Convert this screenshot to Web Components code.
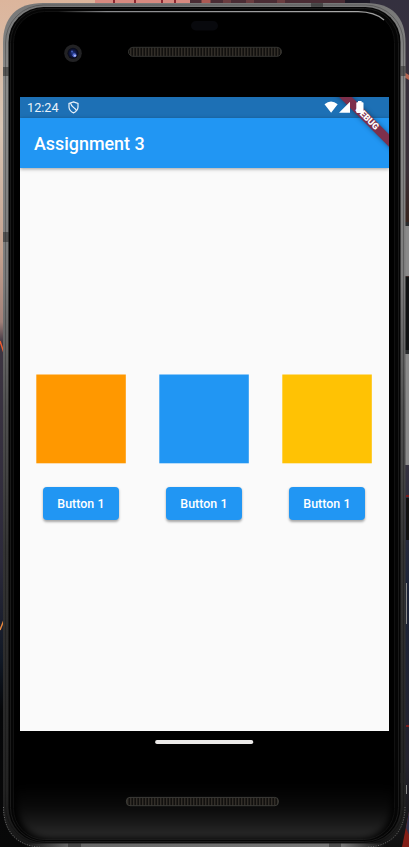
<!DOCTYPE html>
<html lang="en"><head><meta charset="utf-8"><title>Assignment 3</title>
<style>html,body{margin:0;width:409px;height:847px;overflow:hidden;background:#000}</style></head>
<body>
<phone-device><app-screen></app-screen></phone-device>
<script>
const define=(name,html)=>customElements.define(name,class extends HTMLElement{
  constructor(){super();const t=document.createElement('template');
    t.innerHTML=html.replace(/\{(\w+)\}/g,(m,k)=>this.getAttribute(k)||'');
    this.attachShadow({mode:'open'}).append(t.content.cloneNode(true));}
});

define('phone-device',`<style>
:host{display:grid;width:409px;height:847px;overflow:hidden}
svg{grid-area:1/1;display:block}
.face{grid-area:1/1;padding:97px 20px 0 20px;z-index:1}
</style>
<svg width="409" height="847" viewBox="0 0 409 847">
<defs>
<linearGradient id="wl" x2="0" y2="1"><stop offset="0" stop-color="#dcb59c"/><stop offset=".15" stop-color="#d8c5b4"/><stop offset=".3" stop-color="#c5a28f"/><stop offset=".38" stop-color="#a08078"/><stop offset=".405" stop-color="#3d3542"/><stop offset=".66" stop-color="#2c2a3b"/><stop offset=".78" stop-color="#101825"/><stop offset=".84" stop-color="#050608"/><stop offset="1" stop-color="#080808"/></linearGradient>
<linearGradient id="wr" x2="0" y2="1"><stop offset="0" stop-color="#34303f"/><stop offset=".2" stop-color="#3a3038"/><stop offset=".26" stop-color="#38251f"/><stop offset=".55" stop-color="#353240"/><stop offset=".7" stop-color="#1c2438"/><stop offset=".9" stop-color="#24232e"/><stop offset="1" stop-color="#111"/></linearGradient>
<linearGradient id="rim" x2="0" y2="1"><stop offset="0" stop-color="#777"/><stop offset=".1" stop-color="#8b8b8a"/><stop offset=".33" stop-color="#7b7b7b"/><stop offset=".48" stop-color="#505050"/><stop offset=".65" stop-color="#343434"/><stop offset=".93" stop-color="#232323"/><stop offset="1" stop-color="#161616"/></linearGradient>
<linearGradient id="low" gradientUnits="userSpaceOnUse" x1="0" y1="785" x2="0" y2="841"><stop offset="0" stop-color="#000"/><stop offset=".4" stop-color="#0a0a0a"/><stop offset=".65" stop-color="#171717"/><stop offset=".93" stop-color="#2b2b2b"/><stop offset="1" stop-color="#141414"/></linearGradient>
<linearGradient id="base"><stop offset="0" stop-color="#666" stop-opacity="0"/><stop offset=".12" stop-color="#666"/><stop offset=".88" stop-color="#777"/><stop offset="1" stop-color="#777" stop-opacity="0"/></linearGradient>
<linearGradient id="shine"><stop offset="0" stop-color="#999" stop-opacity="0"/><stop offset=".15" stop-color="#88898c"/><stop offset=".9" stop-color="#aaa"/><stop offset="1" stop-color="#999"/></linearGradient>
<pattern id="mesh" width="3" height="10" patternUnits="userSpaceOnUse"><rect width="3" height="10" fill="#11100e"/><rect x="1" width="1.4" height="10" fill="#322e28"/></pattern>
<radialGradient id="lens"><stop offset="0" stop-color="#223b91"/><stop offset=".5" stop-color="#111a4a"/><stop offset="1" stop-color="#070811"/></radialGradient>
<filter id="soft" filterUnits="userSpaceOnUse" x="0" y="740" width="409" height="107" color-interpolation-filters="sRGB"><feGaussianBlur stdDeviation="3.5"/></filter>
<clipPath id="face"><rect x="13" y="11" width="382" height="829" rx="31"/></clipPath>
</defs>
<rect width="205" height="847" fill="url(#wl)"/>
<rect x="204" width="205" height="847" fill="url(#wr)"/>
<rect x="95" width="95" height="6" fill="#d88a80"/><path d="M114 0V5M135 0V5M162 0V5M175 0V5" stroke="#8c2730" stroke-width="2"/>
<path d="M190 0H345V7H190Z" fill="#4a2c34"/><path d="M206 0V5" stroke="#aa5953" stroke-width="9"/><path d="M227 0V5M250 0V5M281 0V5" stroke="#6b3d40" stroke-width="8"/><path d="M345 0H370V6H345Z" fill="#1d1925"/>
<path d="M404 72L409 75V80L404 77Z" fill="#b56652"/>
<path d="M0 341L4 353" stroke="#e85c30" stroke-width="1.5"/><path d="M0 630L4 620" stroke="#e8883d" stroke-width="1.4"/>
<path d="M405 226H409V276H405ZM405 354H409V465H405Z" fill="#898989"/><path d="M405 277H409V350H405Z" fill="#101213"/>
<path d="M405 222H409V226H405ZM405 350H409V354H405Z" fill="#292b2d"/>
<path d="M406 496H409M406 726H409" stroke="#791c1c" stroke-width="2"/><path d="M406.5 583V624M406.5 785V794" stroke="#888"/><path d="M406 498H409V540H406Z" fill="#111"/>
<path d="M402 847L409 812V847Z" fill="#831f17"/><path d="M406 828L409 811V835Z" fill="#33334e"/>
<path d="M3 43C3 17 17 3 43 3H366C392 3 405.5 17 405.5 43V807C405.5 833 392 847.5 366 847.5H43C17 847.5 3 833 3 807Z" fill="url(#rim)"/>
<path d="M3.5 807C3.5 830 16 846 40 847M405 807C405 830 392 846 368 847" fill="none" stroke="#999" stroke-width=".6" stroke-dasharray="1 1.5"/>
<rect x="5.5" y="5" width="398" height="839" rx="38" fill="none" stroke="#000" stroke-opacity=".25"/>
<rect x="8.5" y="7" width="392" height="835.5" rx="35" fill="#050505"/>
<rect x="10.5" y="8.5" width="388" height="833" rx="34" fill="none" stroke="#1a1a1a"/>
<rect x="13.5" y="11.5" width="381" height="828" rx="31" fill="#000" stroke="#111"/>
<g clip-path="url(#face)"><path d="M17 760H392V805Q390 838 358 839H51Q19 838 17 805Z" fill="url(#low)" filter="url(#soft)"/></g>
<rect x="25" y="843.5" width="360" height="3.5" fill="url(#base)"/>
<path d="M58 11.7H358Q375 12 384 20" fill="none" stroke="url(#shine)" stroke-width="1.3"/>
<g fill="#222" fill-opacity=".5"><path d="M3 67H9V76H3ZM3 232H9V242H3ZM400.5 66H405.5V76H400.5ZM311 3H323V7H311ZM400 773H405.5V783H400ZM68 843H81V847H68ZM329 843H341V847H329Z"/></g>
<rect x="191" y="21" width="27" height="9.5" rx="4.7" fill="#08090d"/>
<circle cx="73" cy="53.3" r="8.8" fill="#222224"/><circle cx="73" cy="53.3" r="5.5" fill="url(#lens)"/><circle cx="74.5" cy="55.3" r="2" fill="#566cd0"/><circle cx="75" cy="55.7" r=".9" fill="#c1ceff"/><circle cx="72" cy="51.4" r="1" fill="#405bb1"/>
<rect x="128.5" y="47.3" width="153" height="9" rx="4.5" fill="url(#mesh)" stroke="#343431"/>
<rect x="126.4" y="797.4" width="152" height="8.3" rx="3.6" fill="url(#mesh)" stroke="#3c3c38"/>
<rect x="155.2" y="740" width="98" height="4" rx="1.8" fill="#eceae9"/>
</svg><div class="face"><slot></slot></div>`);

define('status-bar',`<style>
:host{display:flex;height:21px;box-sizing:border-box;background:#1d70b5;color:#e9f2fa;font:12.7px/22px Roboto,sans-serif;padding-left:7px}
span{width:41px}svg{display:block}.r{margin-left:auto;margin-right:23px;position:relative;z-index:2}
</style><span>12:24</span>
<svg width="12" height="21" viewBox="0 0 12 21"><path d="M5.5 4.9 10 6.5V10.3Q9.7 14.1 5.5 15.9 1.3 14.1 1 10.3V6.5ZM2.6 6.2Q3.2 9 5.6 10.4T8.4 13.9" fill="none" stroke="#e9f2fa" stroke-width="1.2"/></svg>
<svg class="r" width="43" height="21" viewBox="0 0 43 21"><path fill="#fff" d="M1.5 7.3Q8 1.8 14.7 7.3L8.1 15.8ZM16 15.8 27 4.8V15.8ZM33.3 6.1Q33.3 5.2 34.2 5.2H35V4H38.6V5.2H39.6Q40.5 5.2 40.5 6.1V15Q40.5 15.9 39.6 15.9H34.2Q33.3 15.9 33.3 15Z"/></svg>`);

define('app-bar',`<style>
:host{display:flex;align-items:center;height:50px;padding-left:14px;background:#2196f3;color:#fff;font:500 17.9px/24px Roboto,sans-serif;box-shadow:0 1px 3px #0004,0 1px 5px #0002}
span{padding-top:1px}
</style><span><slot></slot></span>`);

define('debug-banner',`<style>
:host{position:absolute;inset:0 0 auto auto;width:70px;height:70px;overflow:hidden;pointer-events:none;z-index:1}
div{position:absolute;left:-1.8px;top:17.4px;width:100px;height:9px;transform:rotate(45deg);background:#7d304c;box-shadow:0 0 5px #0006;color:#fff;font:900 9px/9.4px Roboto,sans-serif;text-align:center}
</style><div>DEBUG</div>`);

define('color-item',`<style>
:host{display:flex;flex-direction:column;align-items:center;gap:23.5px;flex:1}
.box{width:89.8px;height:89.3px;display:block}
button{width:76px;height:32.5px;padding:0;border:0;border-radius:4px;background:#2196f3;color:#fff;font:500 12.4px/33px Roboto,sans-serif;letter-spacing:.05px;box-shadow:0 1.5px 2.5px #0005}
</style><svg class="box" viewBox="0 0 90 89.5" preserveAspectRatio="none"><rect x=".3" y=".5" width="89.7" height="89" fill="{color}"/></svg><button><slot></slot></button>`);

define('app-screen',`<style>
:host{display:flex;flex-direction:column;position:relative;width:369px;height:634px;background:#fafafa;overflow:hidden}
main{flex:1;display:flex;align-items:center;padding-bottom:4.8px;margin:0 .6px 0 -.6px}
</style><status-bar></status-bar><app-bar>Assignment 3</app-bar>
<main><color-item color="#ff9800">Button 1</color-item><color-item color="#2196f3">Button 1</color-item><color-item color="#ffc204">Button 1</color-item></main>
<debug-banner></debug-banner>`);
</script></body></html>
